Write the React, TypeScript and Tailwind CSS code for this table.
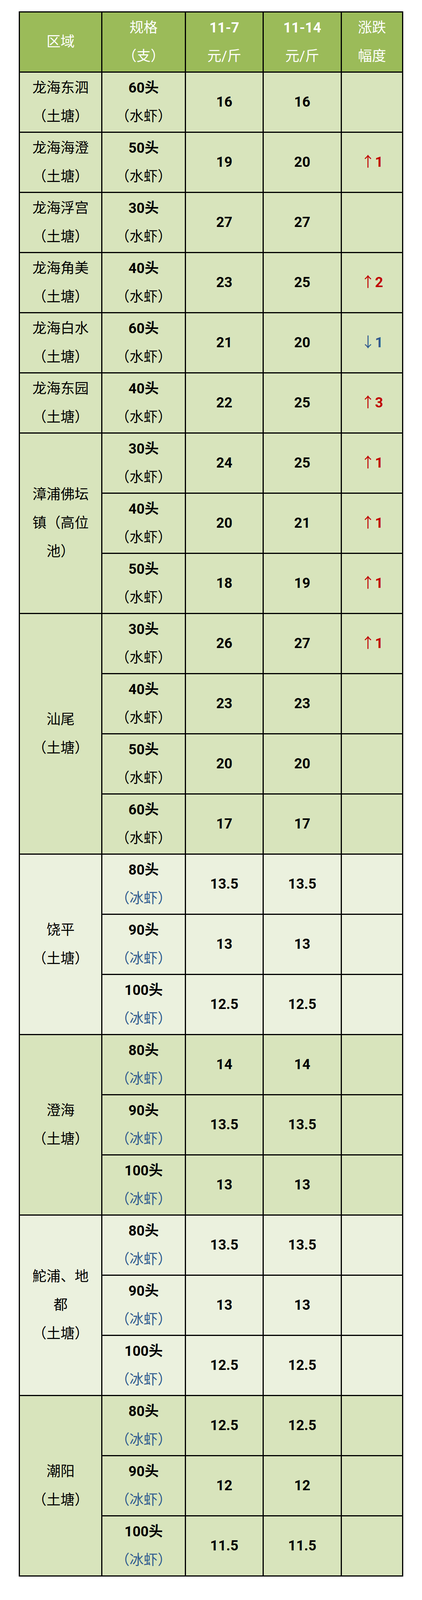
type Change = { dir: "up" | "down"; n: number };

interface PriceRow {
  spec: string;
  kind: "水虾" | "冰虾";
  prev: string;
  curr: string;
  change?: Change;
}

interface Group {
  region: string[];
  light?: boolean;
  rows: PriceRow[];
}

const groups: Group[] = [
  { region: ["龙海东泗", "（土塘）"], rows: [{ spec: "60头", kind: "水虾", prev: "16", curr: "16" }] },
  { region: ["龙海海澄", "（土塘）"], rows: [{ spec: "50头", kind: "水虾", prev: "19", curr: "20", change: { dir: "up", n: 1 } }] },
  { region: ["龙海浮宫", "（土塘）"], rows: [{ spec: "30头", kind: "水虾", prev: "27", curr: "27" }] },
  { region: ["龙海角美", "（土塘）"], rows: [{ spec: "40头", kind: "水虾", prev: "23", curr: "25", change: { dir: "up", n: 2 } }] },
  { region: ["龙海白水", "（土塘）"], rows: [{ spec: "60头", kind: "水虾", prev: "21", curr: "20", change: { dir: "down", n: 1 } }] },
  { region: ["龙海东园", "（土塘）"], rows: [{ spec: "40头", kind: "水虾", prev: "22", curr: "25", change: { dir: "up", n: 3 } }] },
  {
    region: ["漳浦佛坛", "镇（高位", "池）"],
    rows: [
      { spec: "30头", kind: "水虾", prev: "24", curr: "25", change: { dir: "up", n: 1 } },
      { spec: "40头", kind: "水虾", prev: "20", curr: "21", change: { dir: "up", n: 1 } },
      { spec: "50头", kind: "水虾", prev: "18", curr: "19", change: { dir: "up", n: 1 } },
    ],
  },
  {
    region: ["汕尾", "（土塘）"],
    rows: [
      { spec: "30头", kind: "水虾", prev: "26", curr: "27", change: { dir: "up", n: 1 } },
      { spec: "40头", kind: "水虾", prev: "23", curr: "23" },
      { spec: "50头", kind: "水虾", prev: "20", curr: "20" },
      { spec: "60头", kind: "水虾", prev: "17", curr: "17" },
    ],
  },
  {
    region: ["饶平", "（土塘）"],
    light: true,
    rows: [
      { spec: "80头", kind: "冰虾", prev: "13.5", curr: "13.5" },
      { spec: "90头", kind: "冰虾", prev: "13", curr: "13" },
      { spec: "100头", kind: "冰虾", prev: "12.5", curr: "12.5" },
    ],
  },
  {
    region: ["澄海", "（土塘）"],
    rows: [
      { spec: "80头", kind: "冰虾", prev: "14", curr: "14" },
      { spec: "90头", kind: "冰虾", prev: "13.5", curr: "13.5" },
      { spec: "100头", kind: "冰虾", prev: "13", curr: "13" },
    ],
  },
  {
    region: ["鮀浦、地", "都", "（土塘）"],
    light: true,
    rows: [
      { spec: "80头", kind: "冰虾", prev: "13.5", curr: "13.5" },
      { spec: "90头", kind: "冰虾", prev: "13", curr: "13" },
      { spec: "100头", kind: "冰虾", prev: "12.5", curr: "12.5" },
    ],
  },
  {
    region: ["潮阳", "（土塘）"],
    rows: [
      { spec: "80头", kind: "冰虾", prev: "12.5", curr: "12.5" },
      { spec: "90头", kind: "冰虾", prev: "12", curr: "12" },
      { spec: "100头", kind: "冰虾", prev: "11.5", curr: "11.5" },
    ],
  },
];

const spanClass: Record<number, string> = {
  1: "row-span-1",
  3: "row-span-3",
  4: "row-span-4",
};

const cell = "flex flex-col items-center justify-center text-center overflow-hidden";

function HeaderCell({ lines, boldFirst = false }: { lines: string[]; boldFirst?: boolean }) {
  return (
    <div className={`${cell} bg-[#9bbb59] text-white`}>
      {lines.map((l, i) => (
        <div key={i} className={i === 0 && boldFirst ? "font-bold" : ""}>
          {l}
        </div>
      ))}
    </div>
  );
}

// the sheet was drawn for a 4372px tall page; squeeze rows a bit when the viewport is shorter
const PAGE_H = 4372;

export default function App() {
  const viewH = typeof window !== "undefined" && window.innerHeight > 0 ? window.innerHeight : PAGE_H;
  const k = Math.min(1, viewH / PAGE_H);
  const rowH = Math.floor(165 * k) - 3;
  const lead = Math.min(78, Math.floor((rowH - 4) / 2));

  return (
    <div
      className="w-[1080px] overflow-hidden bg-white pl-[48px] font-['Roboto','Noto_Sans_CJK_SC',sans-serif] text-[36px] text-black"
      style={{ height: Math.min(viewH, PAGE_H), paddingTop: Math.round(31 * k), lineHeight: `${lead}px` }}
    >
      <div
        className="grid w-[984px] grid-cols-[208px_211px_196px_197px_154px] gap-[3px] bg-black p-[3px]"
        style={{ gridAutoRows: `${rowH}px` }}
      >
        <HeaderCell lines={["区域"]} />
        <HeaderCell lines={["规格", "（支）"]} />
        <HeaderCell lines={["11-7", "元/斤"]} boldFirst />
        <HeaderCell lines={["11-14", "元/斤"]} boldFirst />
        <HeaderCell lines={["涨跌", "幅度"]} />

        {groups.map((g, gi) => {
          const bg = g.light ? "bg-[#ebf1de]" : "bg-[#d8e4bc]";
          return g.rows.map((r, ri) => (
            <div key={`${gi}-${ri}`} className="contents">
              {ri === 0 && (
                <div className={`${cell} ${bg} col-start-1 ${spanClass[g.rows.length]}`}>
                  {g.region.map((l, li) => (
                    <div key={li}>{l}</div>
                  ))}
                </div>
              )}
              <div className={`${cell} ${bg} col-start-2`}>
                <div className="font-bold">{r.spec}</div>
                <div className={r.kind === "冰虾" ? "text-[#2f5b8f]" : ""}>（{r.kind}）</div>
              </div>
              <div className={`${cell} ${bg} font-bold`}>{r.prev}</div>
              <div className={`${cell} ${bg} font-bold`}>{r.curr}</div>
              <div className={`${cell} ${bg}`}>
                {r.change && (
                  <div className={r.change.dir === "up" ? "text-[#c00000]" : "text-[#2f5b8f]"}>
                    <span className="font-normal">{r.change.dir === "up" ? "↑" : "↓"}</span>
                    <span className="font-bold">{r.change.n}</span>
                  </div>
                )}
              </div>
            </div>
          ));
        })}
      </div>
    </div>
  );
}
